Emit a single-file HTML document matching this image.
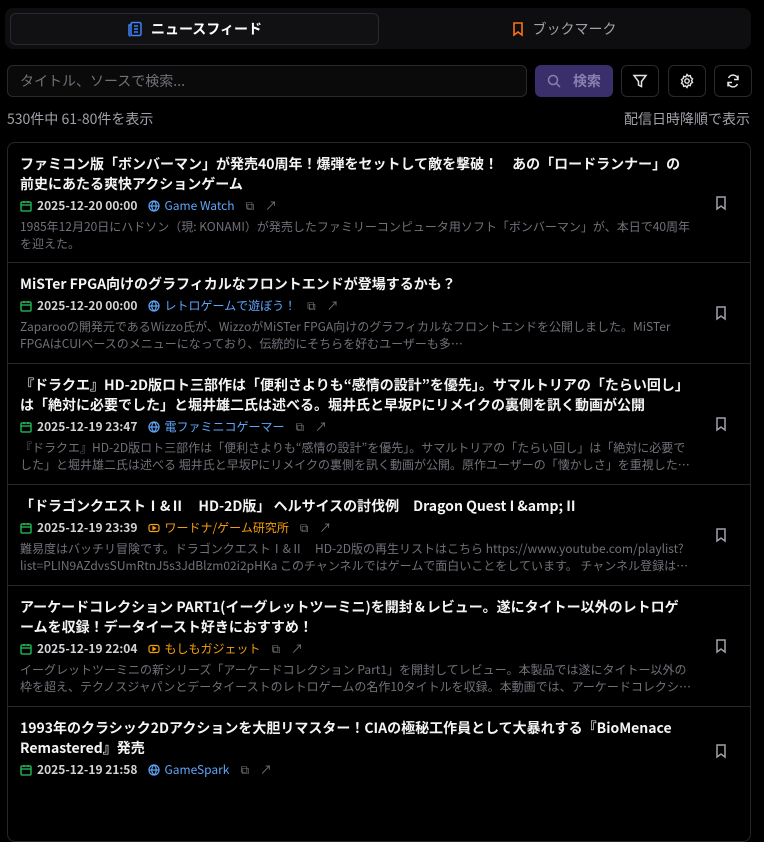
<!DOCTYPE html>
<html><head><meta charset="utf-8"><style>
*{box-sizing:border-box;margin:0;padding:0}
html,body{width:764px;height:781px;overflow:hidden}
body{background:#000;font-family:"Noto Sans CJK JP","Liberation Sans",sans-serif;color:#e5e5e5}
.tabs{position:absolute;left:5px;top:8px;width:746px;height:41px;background:#0e0e10;border-radius:8px}
.tab{position:absolute;top:5px;height:32px;display:flex;align-items:center;justify-content:center;font-size:14px;gap:8px}
.t1{left:5px;width:369px;background:#111113;border:1px solid #2a2a2e;border-radius:6px;color:#fff;font-weight:bold}
.t2{left:376px;width:365px;color:#a1a1aa}
.search{position:absolute;left:7px;top:65px;width:520px;height:32px;border:1px solid #2a2a2e;border-radius:6px;background:#0a0a0b;color:#71717a;font-size:14px;padding:0 12px;line-height:30px}
.sbtn{position:absolute;left:535px;top:65px;width:78px;height:32px;background:#3b2f6b;border-radius:6px;color:#8a80b0;font-size:14px;font-weight:bold;display:flex;align-items:center;justify-content:center;gap:12px}
.ib{position:absolute;top:65px;width:38px;height:32px;border:1px solid #2a2a2e;border-radius:6px;display:flex;align-items:center;justify-content:center}
.count{position:absolute;top:109px;font-size:14px;color:#a1a1aa}
.list{position:absolute;left:7px;top:142px;width:744px;height:700px;border:1px solid #27272a;border-radius:8px}
.item{position:relative;padding:11px 60px 11px 12px;border-bottom:1px solid #27272a}
.title{font-size:14px;font-weight:bold;line-height:20px;color:#f4f4f5}
.meta{font-size:12px;line-height:20px;margin:2px 0;display:flex;align-items:center;gap:5px;font-weight:bold;color:#d4d4d8}
.meta svg{flex:none}
.src{color:#60a5fa;display:flex;align-items:center;gap:4px;margin-left:6px;font-weight:normal}
.src.o{color:#f59e0b}
.desc{font-size:12px;line-height:17px;color:#71717a;width:676px;display:-webkit-box;-webkit-line-clamp:2;-webkit-box-orient:vertical;overflow:hidden}
.bm{position:absolute;right:22px;top:50%;margin-top:-8px}
.x{color:#777;margin-left:6px;font-weight:normal}
</style></head><body>
<div class="tabs">
<div class="tab t1"><svg width="16" height="16" viewBox="0 0 16 16" fill="none" stroke="#3b82f6" stroke-width="1.5"><rect x="4" y="1.5" width="10" height="13" rx="1.5"/><path d="M4 4H2v9.5a1.5 1.5 0 0 0 1.5 1.5M7 5h4M7 8h4M7 11h4"/></svg>ニュースフィード</div>
<div class="tab t2"><svg width="14" height="16" viewBox="0 0 14 16" fill="none" stroke="#f97316" stroke-width="1.6"><path d="M3 2h8v12l-4-3-4 3z"/></svg>ブックマーク</div>
</div>
<div class="search">タイトル、ソースで検索...</div>
<div class="sbtn"><svg width="14" height="14" viewBox="0 0 14 14" fill="none" stroke="#8a80b0" stroke-width="1.5"><circle cx="6" cy="6" r="4.5"/><path d="M9.5 9.5L13 13"/></svg>検索</div>
<div class="ib" style="left:621px"><svg width="16" height="16" viewBox="0 0 16 16" fill="none" stroke="#e5e5e5" stroke-width="1.5"><path d="M2 2.5h12L9.5 8.5v5l-3-1.5v-3.5z"/></svg></div>
<div class="ib" style="left:668px"><svg width="16" height="16" viewBox="0 0 16 16" fill="none" stroke="#e5e5e5" stroke-width="1.4"><circle cx="8" cy="8" r="2.2"/><path d="M8 1.5l1.3 1.6 2-.5.5 2 1.7 1.2-1 1.8 1 1.8-1.7 1.2-.5 2-2-.5L8 14.5l-1.3-1.6-2 .5-.5-2-1.7-1.2 1-1.8-1-1.8 1.7-1.2.5-2 2 .5z"/></svg></div>
<div class="ib" style="left:714px"><svg width="16" height="16" viewBox="0 0 16 16" fill="none" stroke="#e5e5e5" stroke-width="1.5"><path d="M13 6.5A5 5 0 0 0 3.5 5M3 9.5A5 5 0 0 0 12.5 11M13 2.5v4h-4M3 13.5v-4h4"/></svg></div>
<div class="count" style="left:7px">530件中 61-80件を表示</div>
<div class="count" style="right:14px">配信日時降順で表示</div>

<div class="list">
<div class="item" style="padding-bottom:10px"><div class="title">ファミコン版「ボンバーマン」が発売40周年！爆弾をセットして敵を撃破！　あの「ロードランナー」の前史にあたる爽快アクションゲーム</div>
<div class="meta"><svg width="12" height="12" viewBox="0 0 12 12" fill="none" stroke="#22c55e" stroke-width="1.3"><rect x="1" y="2" width="10" height="9" rx="1"/><path d="M1 5h10M4 1v2M8 1v2"/></svg>2025-12-20 00:00<span class="src"><svg width="12" height="12" viewBox="0 0 12 12" fill="none" stroke="#60a5fa" stroke-width="1.2"><circle cx="6" cy="6" r="5"/><path d="M1 6h10M6 1c-3 3-3 7 0 10M6 1c3 3 3 7 0 10"/></svg>Game Watch</span><span class="x">⧉</span><span class="x">↗</span></div>
<div class="desc">1985年12月20日にハドソン（現: KONAMI）が発売したファミリーコンピュータ用ソフト「ボンバーマン」が、本日で40周年を迎えた。</div>
<svg class="bm" width="14" height="16" viewBox="0 0 14 16" fill="none" stroke="#a1a1aa" stroke-width="1.5"><path d="M3 2h8v12l-4-3-4 3z"/></svg></div>

<div class="item"><div class="title">MiSTer FPGA向けのグラフィカルなフロントエンドが登場するかも？</div>
<div class="meta"><svg width="12" height="12" viewBox="0 0 12 12" fill="none" stroke="#22c55e" stroke-width="1.3"><rect x="1" y="2" width="10" height="9" rx="1"/><path d="M1 5h10M4 1v2M8 1v2"/></svg>2025-12-20 00:00<span class="src"><svg width="12" height="12" viewBox="0 0 12 12" fill="none" stroke="#60a5fa" stroke-width="1.2"><circle cx="6" cy="6" r="5"/><path d="M1 6h10M6 1c-3 3-3 7 0 10M6 1c3 3 3 7 0 10"/></svg>レトロゲームで遊ぼう！</span><span class="x">⧉</span><span class="x">↗</span></div>
<div class="desc">Zaparooの開発元であるWizzo氏が、WizzoがMiSTer FPGA向けのグラフィカルなフロントエンドを公開しました。MiSTer FPGAはCUIベースのメニューになっており、伝統的にそちらを好むユーザーも多…</div>
<svg class="bm" width="14" height="16" viewBox="0 0 14 16" fill="none" stroke="#a1a1aa" stroke-width="1.5"><path d="M3 2h8v12l-4-3-4 3z"/></svg></div>

<div class="item"><div class="title">『ドラクエ』HD-2D版ロト三部作は「便利さよりも“感情の設計”を優先」。サマルトリアの「たらい回し」は「絶対に必要でした」と堀井雄二氏は述べる。堀井氏と早坂Pにリメイクの裏側を訊く動画が公開</div>
<div class="meta"><svg width="12" height="12" viewBox="0 0 12 12" fill="none" stroke="#22c55e" stroke-width="1.3"><rect x="1" y="2" width="10" height="9" rx="1"/><path d="M1 5h10M4 1v2M8 1v2"/></svg>2025-12-19 23:47<span class="src"><svg width="12" height="12" viewBox="0 0 12 12" fill="none" stroke="#60a5fa" stroke-width="1.2"><circle cx="6" cy="6" r="5"/><path d="M1 6h10M6 1c-3 3-3 7 0 10M6 1c3 3 3 7 0 10"/></svg>電ファミニコゲーマー</span><span class="x">⧉</span><span class="x">↗</span></div>
<div class="desc">『ドラクエ』HD-2D版ロト三部作は「便利さよりも“感情の設計”を優先」。サマルトリアの「たらい回し」は「絶対に必要でした」と堀井雄二氏は述べる 堀井氏と早坂Pにリメイクの裏側を訊く動画が公開。原作ユーザーの「懐かしさ」を重視した…</div>
<svg class="bm" width="14" height="16" viewBox="0 0 14 16" fill="none" stroke="#a1a1aa" stroke-width="1.5"><path d="M3 2h8v12l-4-3-4 3z"/></svg></div>

<div class="item"><div class="title">「ドラゴンクエストⅠ&amp;Ⅱ　HD-2D版」 ヘルサイスの討伐例　Dragon Quest I &amp;amp; II</div>
<div class="meta"><svg width="12" height="12" viewBox="0 0 12 12" fill="none" stroke="#22c55e" stroke-width="1.3"><rect x="1" y="2" width="10" height="9" rx="1"/><path d="M1 5h10M4 1v2M8 1v2"/></svg>2025-12-19 23:39<span class="src o"><svg width="12" height="12" viewBox="0 0 12 12" fill="none" stroke="#f59e0b" stroke-width="1.2"><rect x="1" y="2.5" width="10" height="7" rx="2"/><path d="M5 4.5v3l2.5-1.5z" fill="#f59e0b"/></svg>ワードナ/ゲーム研究所</span><span class="x">⧉</span><span class="x">↗</span></div>
<div class="desc">難易度はバッチリ冒険です。ドラゴンクエストⅠ&amp;Ⅱ　HD-2D版の再生リストはこちら https://www.youtube.com/playlist?list=PLIN9AZdvsSUmRtnJ5s3JdBlzm02i2pHKa このチャンネルではゲームで面白いことをしています。 チャンネル登録はこ…</div>
<svg class="bm" width="14" height="16" viewBox="0 0 14 16" fill="none" stroke="#a1a1aa" stroke-width="1.5"><path d="M3 2h8v12l-4-3-4 3z"/></svg></div>

<div class="item"><div class="title">アーケードコレクション PART1(イーグレットツーミニ)を開封＆レビュー。遂にタイトー以外のレトロゲームを収録！データイースト好きにおすすめ！</div>
<div class="meta"><svg width="12" height="12" viewBox="0 0 12 12" fill="none" stroke="#22c55e" stroke-width="1.3"><rect x="1" y="2" width="10" height="9" rx="1"/><path d="M1 5h10M4 1v2M8 1v2"/></svg>2025-12-19 22:04<span class="src o"><svg width="12" height="12" viewBox="0 0 12 12" fill="none" stroke="#f59e0b" stroke-width="1.2"><rect x="1" y="2.5" width="10" height="7" rx="2"/><path d="M5 4.5v3l2.5-1.5z" fill="#f59e0b"/></svg>もしもガジェット</span><span class="x">⧉</span><span class="x">↗</span></div>
<div class="desc">イーグレットツーミニの新シリーズ「アーケードコレクション Part1」を開封してレビュー。本製品では遂にタイトー以外の枠を超え、テクノスジャパンとデータイーストのレトロゲームの名作10タイトルを収録。本動画では、アーケードコレクショ…</div>
<svg class="bm" width="14" height="16" viewBox="0 0 14 16" fill="none" stroke="#a1a1aa" stroke-width="1.5"><path d="M3 2h8v12l-4-3-4 3z"/></svg></div>

<div class="item" style="border:none"><div class="title">1993年のクラシック2Dアクションを大胆リマスター！CIAの極秘工作員として大暴れする『BioMenace Remastered』発売</div>
<div class="meta"><svg width="12" height="12" viewBox="0 0 12 12" fill="none" stroke="#22c55e" stroke-width="1.3"><rect x="1" y="2" width="10" height="9" rx="1"/><path d="M1 5h10M4 1v2M8 1v2"/></svg>2025-12-19 21:58<span class="src"><svg width="12" height="12" viewBox="0 0 12 12" fill="none" stroke="#60a5fa" stroke-width="1.2"><circle cx="6" cy="6" r="5"/><path d="M1 6h10M6 1c-3 3-3 7 0 10M6 1c3 3 3 7 0 10"/></svg>GameSpark</span><span class="x">⧉</span><span class="x">↗</span></div>
<svg class="bm" width="14" height="16" viewBox="0 0 14 16" fill="none" stroke="#a1a1aa" stroke-width="1.5" style="top:36px;margin:0"><path d="M3 2h8v12l-4-3-4 3z"/></svg></div>
</div>
</body></html>
